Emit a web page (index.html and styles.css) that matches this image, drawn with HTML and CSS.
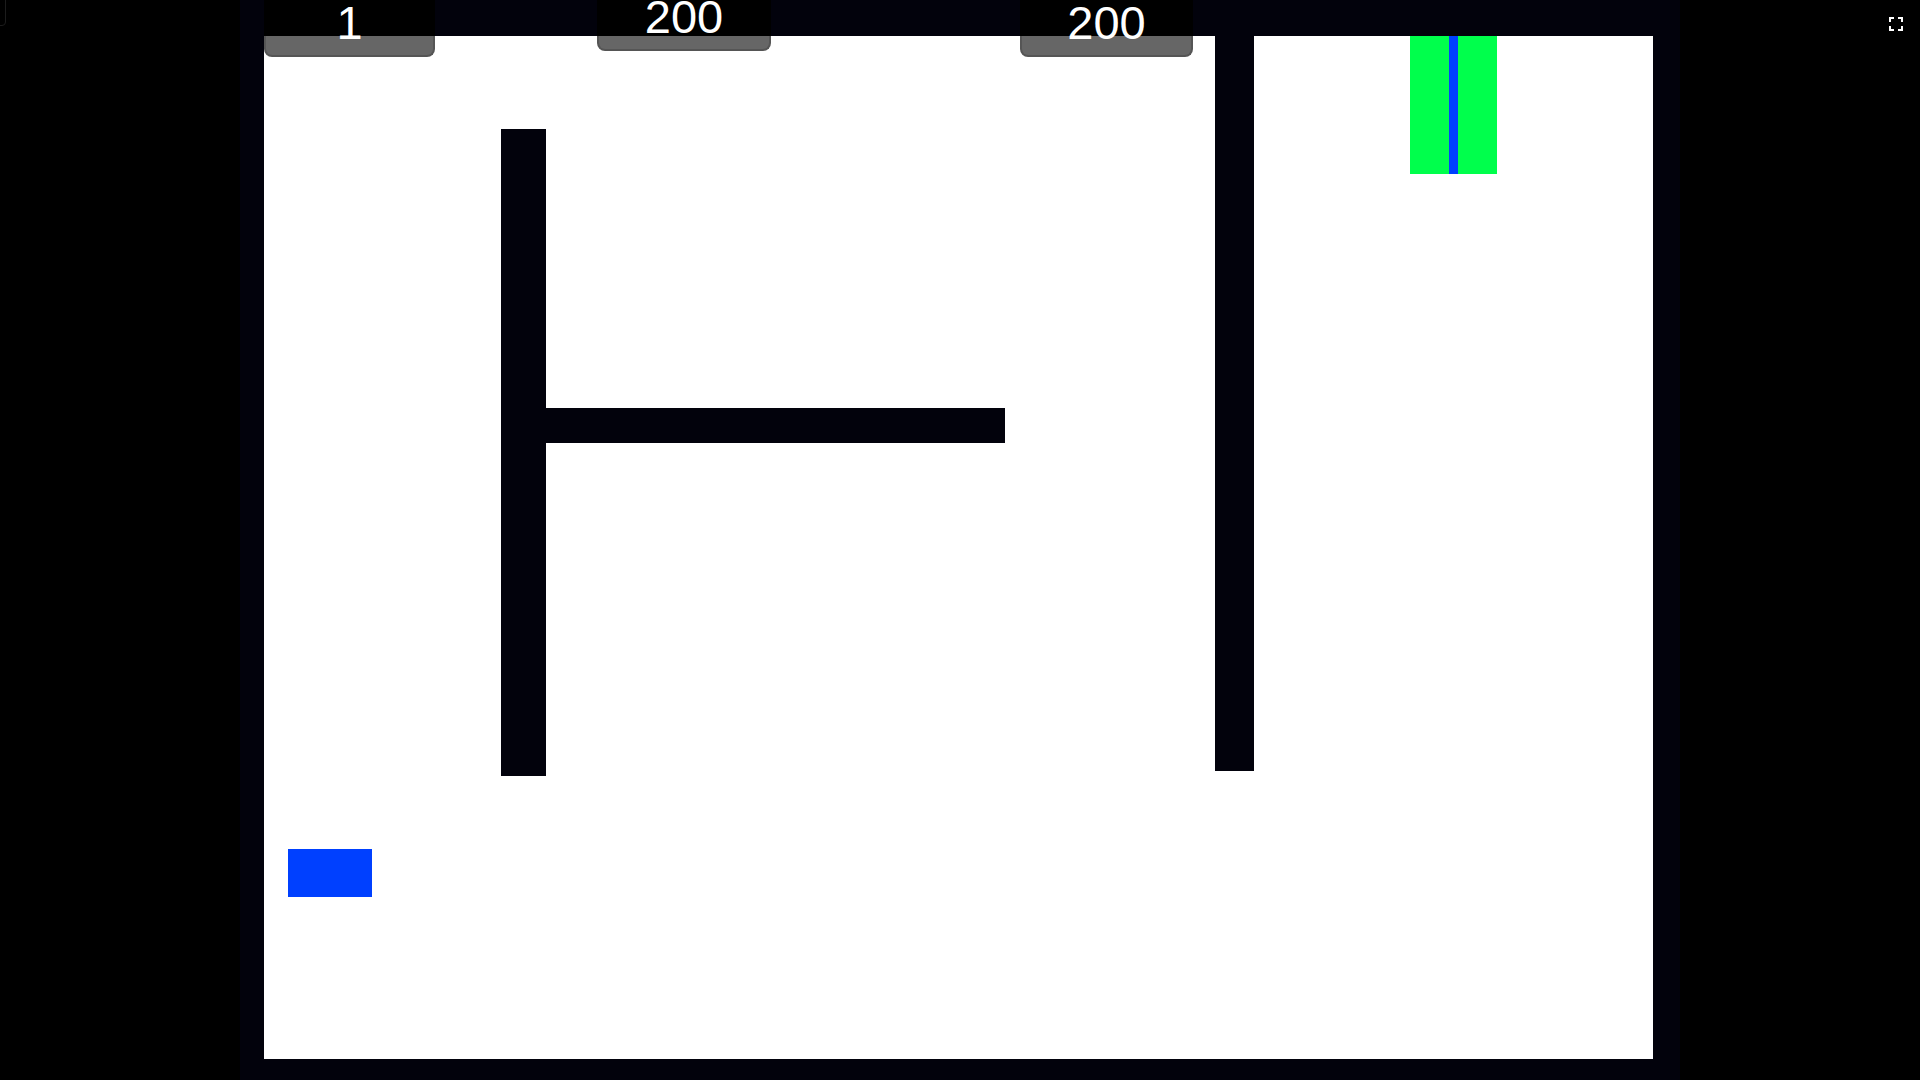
FILE: index.html
```html
<!DOCTYPE html>
<html>
<head>
    <title>Maze</title>
    <link rel="stylesheet" href="styles.css">
</head>
<body>
    <div class="corner-btn"></div>
    <div class="stage">
        <div class="tab tab-level">
            <div class="tab-head"></div>
            <div class="tab-foot"></div>
            <span class="tab-text">1</span>
        </div>
        <div class="tab tab-time">
            <div class="tab-head"></div>
            <div class="tab-foot short"></div>
            <span class="tab-text raised">200</span>
        </div>
        <div class="tab tab-score">
            <div class="tab-head"></div>
            <div class="tab-foot"></div>
            <span class="tab-text">200</span>
        </div>

        <div class="field">
            <div class="wall wall-left"></div>
            <div class="wall wall-mid"></div>
            <div class="wall wall-right"></div>
            <div class="goal"><div class="goal-line"></div></div>
            <div class="player"></div>
        </div>
    </div>
    <svg class="fullscreen" width="14" height="14" viewBox="0 0 14 14">
        <path d="M1 5V1h4M9 1h4v4M13 9v4H9M5 13H1V9" fill="none" stroke="#fff" stroke-width="2"/>
    </svg>
</body>
</html>
```

FILE: styles.css
```css
body {
    margin: 0;
    background-color: #000;
    height: 1080px;
    overflow: hidden;
    font-family: "Liberation Sans", Arial, sans-serif;
}
.stage {
    position: relative;
    box-sizing: border-box;
    margin-left: 240px;
    width: 1440px;
    height: 1080px;
    padding: 36px 27px 21px 24px;
    background-color: #02020c;
}
.field {
    position: relative;
    height: 100%;
    background-color: #fff;
}
.tab {
    position: absolute;
    top: 0;
    z-index: 2;
}
.tab-level {
    left: 24px;
    width: 171px;
}
.tab-time {
    left: 357px;
    width: 174px;
}
.tab-score {
    left: 780px;
    width: 173px;
}
.tab-head {
    height: 36px;
    background-color: #000;
}
.tab-foot {
    box-sizing: border-box;
    height: 21px;
    background-color: #666;
    border: 2px solid #555;
    border-top: none;
    border-radius: 0 0 8px 8px;
}
.tab-foot.short {
    height: 15px;
}
.tab-text {
    position: absolute;
    top: -1px;
    left: 0;
    right: 0;
    text-align: center;
    color: #fff;
    font-size: 47px;
    line-height: 47px;
}
.tab-text.raised {
    top: -7px;
}
.wall {
    position: absolute;
    background-color: #02020c;
}
.wall-left {
    left: 237px;
    top: 93px;
    width: 45px;
    height: 647px;
}
.wall-mid {
    left: 282px;
    top: 372px;
    width: 459px;
    height: 35px;
}
.wall-right {
    left: 951px;
    top: 0;
    width: 39px;
    height: 735px;
}
.goal {
    position: absolute;
    left: 1146px;
    top: 0;
    width: 87px;
    height: 138px;
    background-color: #00ff4c;
}
.goal-line {
    margin-left: 39px;
    width: 9px;
    height: 100%;
    background-color: #0040ff;
}
.player {
    position: absolute;
    left: 24px;
    top: 813px;
    width: 84px;
    height: 48px;
    background-color: #0040ff;
}
.fullscreen {
    position: absolute;
    left: 1889px;
    top: 17px;
}
.corner-btn {
    position: absolute;
    left: -20px;
    top: -4px;
    width: 24px;
    height: 28px;
    border: 1px solid #1c1c1c;
    border-radius: 4px;
}
```
